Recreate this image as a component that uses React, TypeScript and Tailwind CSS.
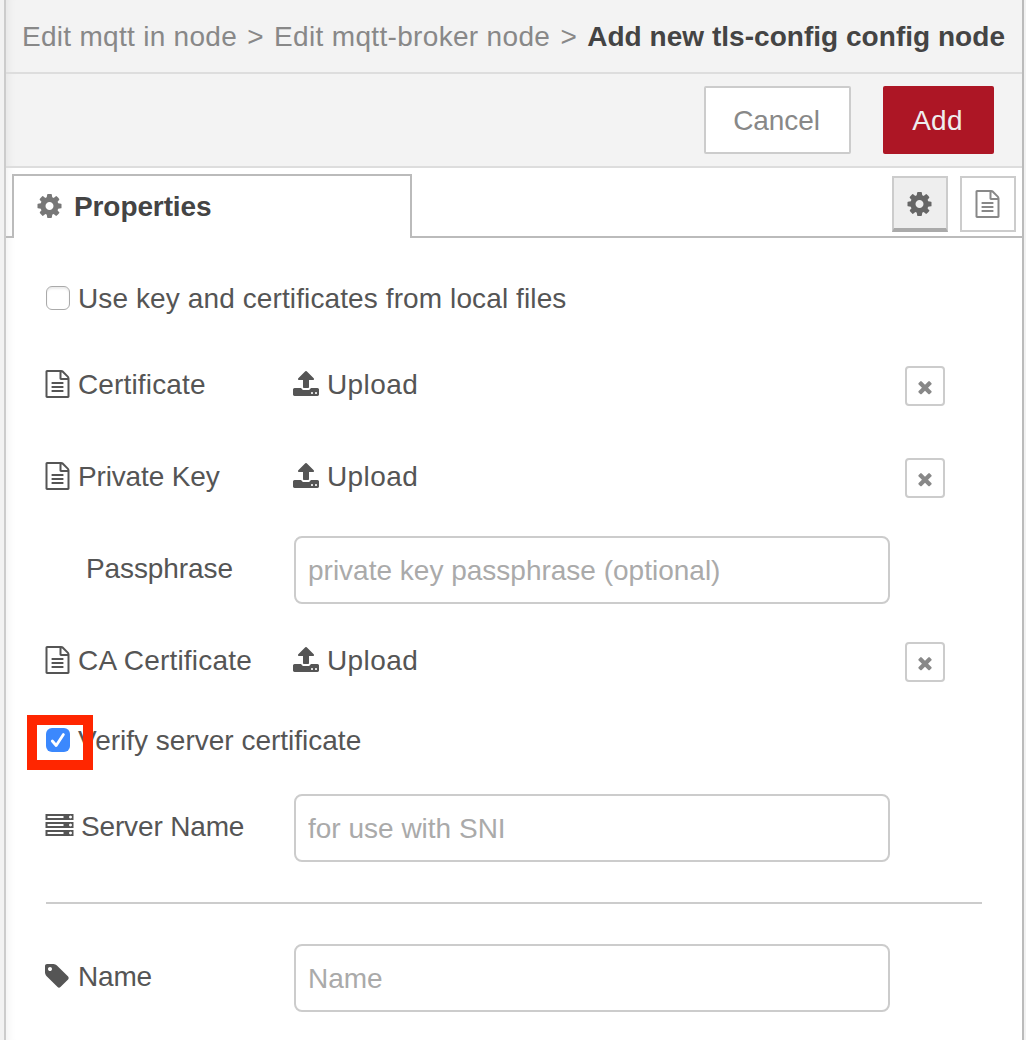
import type { ReactNode } from "react";

const PATHS = {
  file: "M1596 380q28 28 48 76t20 88v1152q0 40-28 68t-68 28h-1344q-40 0-68-28t-28-68v-1600q0-40 28-68t68-28h896q40 0 88 20t76 48zm-444-244v376h376q-10-29-22-41l-313-313q-12-12-41-22zm384 1528v-1024h-416q-40 0-68-28t-28-68v-416h-768v1536h1280zm-1024-864q0-14 9-23t23-9h704q14 0 23 9t9 23v64q0 14-9 23t-23 9h-704q-14 0-23-9t-9-23v-64zm736 224q14 0 23 9t9 23v64q0 14-9 23t-23 9h-704q-14 0-23-9t-9-23v-64q0-14 9-23t23-9h704zm0 256q14 0 23 9t9 23v64q0 14-9 23t-23 9h-704q-14 0-23-9t-9-23v-64q0-14 9-23t23-9h704z",
  upload:
    "M1344 1472q0-26-19-45t-45-19-45 19-19 45 19 45 45 19 45-19 19-45zm256 0q0-26-19-45t-45-19-45 19-19 45 19 45 45 19 45-19 19-45zm128-224v320q0 40-28 68t-68 28h-1472q-40 0-68-28t-28-68v-320q0-40 28-68t68-28h427q21 56 70.5 92t110.5 36h256q61 0 110.5-36t70.5-92h427q40 0 68 28t28 68zm-325-648q-17 40-59 40h-256v448q0 26-19 45t-45 19h-256q-26 0-45-19t-19-45v-448h-256q-42 0-59-40-17-39 14-69l448-448q18-19 45-19t45 19l448 448q31 30 14 69z",
  cog: "M1152 896q0-106-75-181t-181-75-181 75-75 181 75 181 181 75 181-75 75-181zm512-109v222q0 12-8 23t-20 13l-185 28q-19 54-39 91 35 50 107 138 10 12 10 25t-9 23q-27 37-99 108t-94 71q-12 0-26-9l-138-108q-44 23-91 38-16 136-29 186-7 28-36 28h-222q-14 0-24.5-8.5t-11.5-21.5l-28-184q-49-16-90-37l-141 107q-10 9-25 9-14 0-25-11-126-114-165-168-7-10-7-23 0-12 8-23 15-21 51-66.5t54-70.5q-27-50-41-99l-183-27q-13-2-21-12.5t-8-23.5v-222q0-12 8-23t19-13l186-28q14-46 39-92-40-57-107-138-10-12-10-24 0-10 9-23 26-36 98.5-107.5t94.5-71.5q13 0 26 10l138 107q44-23 91-38 16-136 29-186 7-28 36-28h222q14 0 24.5 8.5t11.5 21.5l28 184q49 16 90 37l142-107q9-9 24-9 13 0 25 10 129 119 165 170 7 8 7 22 0 12-8 23-15 21-51 66.5t-54 70.5q26 50 41 98l183 28q13 2 21 12.5t8 23.5z",
  tag: "M576 448q0-53-37.5-90.5t-90.5-37.5-90.5 37.5-37.5 90.5 37.5 90.5 90.5 37.5 90.5-37.5 37.5-90.5zm1067 576q0 53-37 90l-491 492q-39 37-91 37-53 0-90-37l-715-716q-38-37-64.5-101t-26.5-117v-416q0-52 38-90t90-38h416q53 0 117 26.5t102 64.5l715 714q37 39 37 91z",
  times:
    "M1490 1322q0 40-28 68l-136 136q-28 28-68 28t-68-28l-294-294-294 294q-28 28-68 28t-68-28l-136-136q-28-28-28-68t28-68l294-294-294-294q-28-28-28-68t28-68l136-136q28-28 68-28t68 28l294 294 294-294q28-28 68-28t68 28l136 136q28 28 28 68t-28 68l-294 294 294 294q28 28 28 68z",
  server:
    "M128 1408h1024v-128h-1024v128zm0-512h1024v-128h-1024v128zm1568 448q0-40-28-68t-68-28-68 28-28 68 28 68 68 28 68-28 28-68zm-1568-960h1024v-128h-1024v128zm1568 448q0-40-28-68t-68-28-68 28-28 68 28 68 68 28 68-28 28-68zm0-512q0-40-28-68t-68-28-68 28-28 68 28 68 68 28 68-28 28-68zm96 832v384h-1792v-384h1792zm0-512v384h-1792v-384h1792zm0-512v384h-1792v-384h1792z",
};

function Icon({ name, box = "0 0 1792 1792", className }: { name: keyof typeof PATHS; box?: string; className: string }) {
  return (
    <svg viewBox={box} fill="currentColor" className={`shrink-0 ${className}`} aria-hidden="true">
      <path d={PATHS[name]} />
    </svg>
  );
}

const FileIcon = () => <Icon name="file" box="128 0 1536 1792" className="-ml-px mr-2 h-7 w-[25px] -translate-y-0.5" />;

function Row({ children, className = "" }: { children: ReactNode; className?: string }) {
  return <div className={`flex h-[68px] items-center ${className}`}>{children}</div>;
}

function Label({ icon, children, className }: { icon?: ReactNode; children: ReactNode; className: string }) {
  return (
    <label className="flex w-[248px] shrink-0 items-center">
      {icon}
      <span className={`-translate-y-px whitespace-nowrap ${className}`}>{children}</span>
    </label>
  );
}

function UploadRow({ label, labelClass, className }: { label: string; labelClass: string; className: string }) {
  return (
    <Row className={className}>
      <Label icon={<FileIcon />} className={labelClass}>
        {label}
      </Label>
      <div className="flex w-[611px] items-center">
        <Icon name="upload" box="64 0 1664 1792" className="-ml-px mr-2 h-7 w-[26px] -translate-y-0.5" />
        <span className="-translate-y-px tracking-[0.4px]">Upload</span>
      </div>
      <button className="flex size-10 items-center justify-center rounded-[4px] border-2 border-[#ccc] text-[#888]">
        <Icon name="times" className="size-5 translate-y-px" />
      </button>
    </Row>
  );
}

function Field({ placeholder }: { placeholder: string }) {
  return (
    <input
      placeholder={placeholder}
      className="h-[68px] w-[596px] rounded-lg border-2 border-[#ccc] bg-white px-3 pt-0.5 placeholder:text-[#aaa]"
    />
  );
}

export default function App() {
  return (
    <div className="flex h-[1040px] w-[1026px] overflow-hidden bg-[#f2f2f2] pr-0.5 pl-1 font-['Liberation_Sans',Arial,sans-serif] text-[28px] leading-10 text-[#555]">
      <div className="w-full border-r-2 border-l-2 border-r-[#bbb] border-l-[#ccc] bg-white shadow-[inset_10px_0_10px_-8px_rgba(0,0,0,0.06)]">
        <header className="flex h-[74px] items-center border-b-2 border-[#ddd] bg-[#f3f3f3] pt-0.5 pl-4 whitespace-pre text-[#888] shadow-[inset_10px_0_10px_-8px_rgba(0,0,0,0.06)]">
          <span className="tracking-[0.29px]">Edit mqtt in node</span>
          <span className="w-[37px] text-center"> &gt; </span>
          <span className="tracking-[0.33px]">Edit mqtt-broker node</span>
          <span className="w-[37px] text-center"> &gt; </span>
          <span className="font-bold tracking-[0.03px] text-[#444]">Add new tls-config config node</span>
        </header>

        <div className="flex h-[94px] justify-end border-b-2 border-[#ddd] bg-[#f3f3f3] pt-3 pr-7 shadow-[inset_10px_0_10px_-8px_rgba(0,0,0,0.06)]">
          <button className="mr-8 h-[68px] w-[147px] rounded-[2px] border-2 border-[#ccc] bg-white pt-0.5 pr-0.5 tracking-[-0.1px] text-[#888]">
            Cancel
          </button>
          <button className="h-[68px] w-[111px] rounded-[2px] bg-[#ad1625] pt-0.5 pr-0.5 tracking-[0.3px] text-[#eee]">Add</button>
        </div>

        <div className="flex h-[70px]">
          <div className="w-1.5 border-b-2 border-[#bbb]" />
          <div className="mt-1.5 flex w-[400px] items-center border-2 border-b-0 border-[#bbb] bg-white pl-[23px]">
            <Icon name="cog" box="128 0 1536 1792" className="mr-3 h-7 w-[25px] -translate-y-px text-[#777]" />
            <span className="font-bold tracking-[-0.1px] text-[#444]">Properties</span>
          </div>
          <div className="flex flex-1 justify-end gap-3 border-b-2 border-[#bbb] pt-2 pr-1.5">
            <button className="flex size-14 items-center justify-center border-2 border-b-4 border-[#ccc] border-b-[#aaa] bg-[#eee] text-[#666]">
              <Icon name="cog" box="128 0 1536 1792" className="h-7 w-[25px] -translate-x-px translate-y-px" />
            </button>
            <button className="flex size-14 items-center justify-center border-2 border-[#ccc] bg-white text-[#888]">
              <Icon name="file" box="128 0 1536 1792" className="h-7 w-[25px] -translate-x-px" />
            </button>
          </div>
        </div>

        <form className="pt-[26px] pr-10 pl-10">
          <Row>
            <span className="mr-2 size-6 rounded-[6px] border border-[#aaa] bg-white shadow-[inset_0_2px_2px_rgba(0,0,0,0.08)]" />
            <span className="translate-y-px tracking-[0.11px]">Use key and certificates from local files</span>
          </Row>
          <UploadRow label="Certificate" labelClass="tracking-[0.15px]" className="mt-5" />
          <UploadRow label="Private Key" labelClass="tracking-[-0.15px]" className="mt-6" />
          <Row className="mt-6">
            <Label className="pl-10 tracking-[-0.1px]">Passphrase</Label>
            <Field placeholder="private key passphrase (optional)" />
          </Row>
          <UploadRow label="CA Certificate" labelClass="tracking-[0.2px]" className="mt-6" />
          <Row className="relative mt-2.5">
            <span className="mr-2 flex size-6 items-center justify-center rounded-[6px] bg-[#3b88fd]">
              <svg viewBox="0 0 24 24" className="size-6" fill="none" stroke="white" strokeWidth="2.8" strokeLinecap="round" strokeLinejoin="round">
                <path d="M6.3 13 10.2 17.5 17.4 6.6" />
              </svg>
            </span>
            <span className="translate-y-px">Verify server certificate</span>
            <span className="absolute top-[9px] left-[-19px] h-[55px] w-[66px] border-10 border-[#ff2600]" />
          </Row>
          <Row className="mt-5">
            <Label icon={<Icon name="server" className="-ml-px mr-[7px] h-7 w-[29px] -translate-y-0.5" />} className="tracking-[-0.15px]">
              Server Name
            </Label>
            <Field placeholder="for use with SNI" />
          </Row>
          <hr className="mt-10 w-[936px] border-t-2 border-[#ccc]" />
          <Row className="mt-10">
            <Label icon={<Icon name="tag" box="128 0 1664 1792" className="-ml-px mr-[7px] h-7 w-[26px] -translate-y-0.5" />} className="tracking-[-0.2px]">
              Name
            </Label>
            <Field placeholder="Name" />
          </Row>
        </form>
      </div>
    </div>
  );
}
